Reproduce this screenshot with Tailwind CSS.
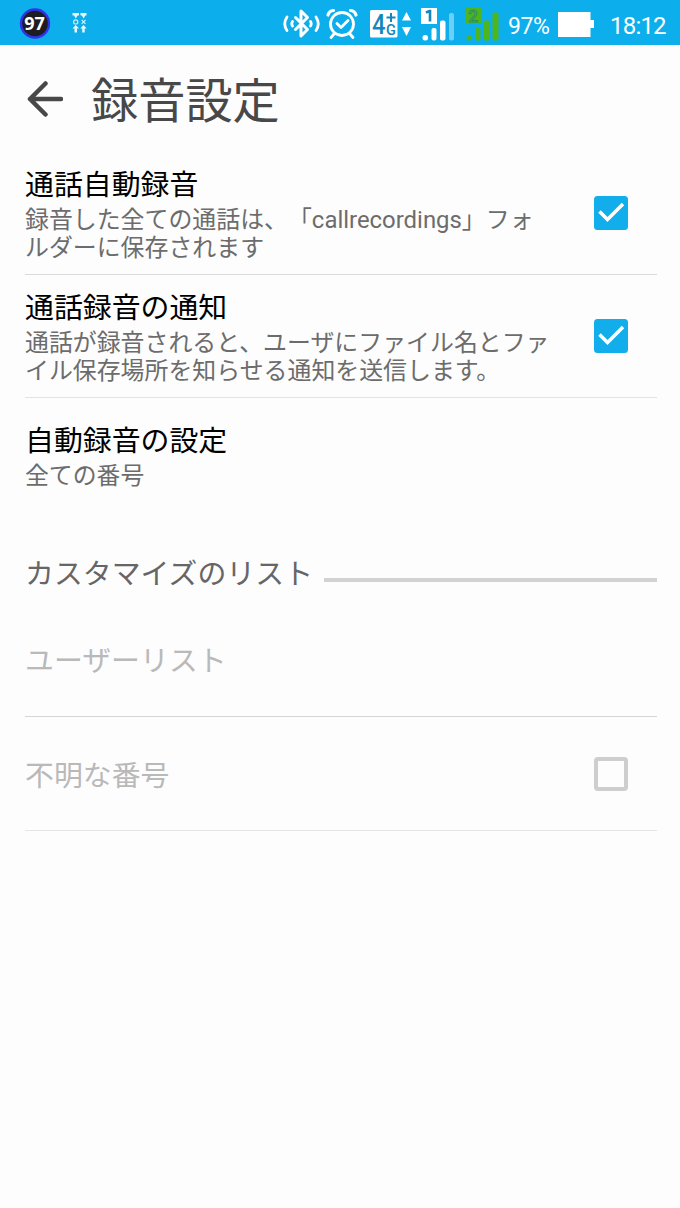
<!DOCTYPE html>
<html lang="ja">
<head>
<meta charset="utf-8">
<title>録音設定</title>
<script src="https://cdn.jsdelivr.net/npm/@tailwindcss/browser@4"></script>
</head>
<body class="w-[680px] h-[1208px] overflow-hidden bg-[#fdfdfd] font-['Roboto','Noto_Sans_CJK_JP',sans-serif] [text-spacing-trim:space-all]">
<header class="h-[45px] bg-[#0daeec] flex items-center text-white">
  <svg class="block shrink-0" width="508" height="45" viewBox="0 0 508 45" fill="none">
    <circle cx="35" cy="23.500" r="14" fill="#1c1c22" stroke="#2f35e6" stroke-width="2.400"/>
    <text x="34.500" y="30" text-anchor="middle" font-family="Open Sans" font-weight="700" font-size="18" fill="#fff">97</text>
    <g fill="#e6f7fe">
      <path d="M72.500 13h6.500v2.500h-1.500l-1.700 3-1.700-3h-1.600zM80.500 13h6v2.500h-1.200l-1.700 3-1.700-3h-1.400zM74.500 32.500v-4h-2l3.300-3.500 3.200 3.500h-2v4zM82.200 32.500v-4h-1.900l3.200-3.500 3.200 3.500h-2v4z"/>
    </g>
    <path d="M81.700 20l3.800 3.800m0-3.800l-3.800 3.800" stroke="#c9eefc" stroke-width="1.200"/>
    <circle cx="75.700" cy="21.900" r="2.100" stroke="#c9eefc" stroke-width="1.200"/>
    <g stroke="#fff" stroke-linecap="round" stroke-linejoin="round">
      <path stroke-width="3" d="M295.500 17.500l12 12-6.500 6.500V11l6.500 6.500-12 12"/>
      <path stroke-width="2.800" d="M287 17q-4.500 6.800 0 13.500M316 17q4.500 6.800 0 13.500"/>
      <path stroke-width="2.800" d="M292.500 21.500q-1.500 2.300 0 4.600M310.500 21.500q1.500 2.300 0 4.600"/>
      <circle cx="342" cy="24" r="11.500" stroke-width="2.800"/>
      <path stroke-width="2.800" d="M337 23.500l4 4 7-7M334 34l-3 3.500M350 34l3 3.500"/>
      <path stroke-width="3.200" d="M328 15q1-4 5.500-4.500M350.500 10.500q4.500.5 5.500 4.500"/>
    </g>
    <rect x="370" y="10" width="27.500" height="27.500" rx="1.500" fill="#fff"/>
    <text x="372" y="34" font-family="Roboto" font-weight="500" font-size="28" textLength="13.500" lengthAdjust="spacingAndGlyphs" fill="#1686bd">4</text>
    <path d="M386.500 17.500h9M391 13v9" stroke="#1686bd" stroke-width="2"/>
    <text x="386" y="34.500" font-family="Roboto" font-weight="500" font-size="14.500" fill="#1686bd">G</text>
    <path d="M402 20.500l4.500-8.500 4.500 8.500zM402 27h9l-4.500 9z" fill="#fff"/>
    <rect x="421" y="8" width="16" height="16" fill="#fff"/>
    <path d="M426 12.500l3.500-1.500h.5V21.500" stroke="#1686bd" stroke-width="2.600"/>
    <g fill="#fff">
      <rect x="422.500" y="35" width="5.500" height="5.500" rx="2.500"/>
      <rect x="431.500" y="28" width="5" height="12.500" rx="2"/>
      <rect x="440" y="20.500" width="5.500" height="20" rx="2"/>
      <rect x="449" y="13" width="5" height="27.500" rx="2" fill="#6dcff7"/>
    </g>
    <g fill="#4eb51d">
      <rect x="465" y="8" width="16.500" height="16"/>
      <rect x="466.500" y="35" width="5.500" height="5.500" rx="2.500"/>
      <rect x="475.500" y="28" width="5" height="12.500" rx="1.500"/>
      <rect x="484" y="20.500" width="5.500" height="20" rx="1.500"/>
      <rect x="492.500" y="12.500" width="6" height="28" rx="1.500"/>
    </g>
    <text x="473" y="21.500" text-anchor="middle" font-family="Roboto" font-weight="500" font-size="17" fill="#4eb51d" stroke="#2a8f68" stroke-width=".9">2</text>
  </svg>
  <span class="w-[50px] pt-[7px] text-[23px] leading-none tracking-[-0.4px]">97%</span>
  <svg class="block shrink-0" width="36" height="45" viewBox="0 0 36 45"><path fill="#fff" d="M0 12h32.500v8H36v8h-3.500v9H0z"/></svg>
  <span class="ml-[16px] pt-[6px] text-[24px] leading-none tracking-[-0.8px] whitespace-nowrap">18:12</span>
</header>
<div class="h-[107px] flex items-center pl-[27px] text-[#484848]">
  <svg class="block shrink-0" width="36" height="36" viewBox="0 0 36 36" fill="none" stroke="currentColor" stroke-width="4.500" stroke-linecap="round" stroke-linejoin="round"><path d="M18.500 2.500L3 18l15.500 15.500M3 18h31"/></svg>
  <h1 class="ml-[28px] pt-[8px] text-[47.200px] leading-none">録音設定</h1>
</div>
<main class="pl-[25px] pr-[23px]">
  <section class="h-[123px] border-b border-[#dadada] flex items-center justify-between pr-[29px]">
    <div class="pt-[2px]">
      <h2 class="text-[28.900px] leading-[38px] text-black">通話自動録音</h2>
      <p class="pt-[2px] text-[23.920px] leading-[28px] text-[#6c6c6c] whitespace-nowrap">録音した全ての通話は、「callrecordings」フォ<br>ルダーに保存されます</p>
    </div>
    <svg class="block shrink-0" width="34" height="34" viewBox="0 0 34 34" fill="none"><rect width="34" height="34" rx="3.500" fill="#12aeec"/><path d="M5.500 15.500l8 8 15.500-15.500" stroke="#fff" stroke-width="3.500"/></svg>
  </section>
  <section class="h-[123px] border-b border-[#e3e3e3] flex items-center justify-between pr-[29px]">
    <div class="pt-[2px]">
      <h2 class="text-[28.900px] leading-[38px] text-black">通話録音の通知</h2>
      <p class="pt-[2px] text-[23.920px] leading-[28px] text-[#6c6c6c] whitespace-nowrap">通話が録音されると、ユーザにファイル名とファ<br>イル保存場所を知らせる通知を送信します。</p>
    </div>
    <svg class="block shrink-0" width="34" height="34" viewBox="0 0 34 34" fill="none"><rect width="34" height="34" rx="3.500" fill="#12aeec"/><path d="M5.500 15.500l8 8 15.500-15.500" stroke="#fff" stroke-width="3.500"/></svg>
  </section>
  <section class="h-[116px] flex flex-col justify-center">
    <h2 class="text-[28.900px] leading-[38px] text-black">自動録音の設定</h2>
    <p class="pt-[2px] text-[23.850px] leading-[28px] text-[#6c6c6c]">全ての番号</p>
  </section>
  <div class="h-[89px] pt-[30px] flex items-center">
    <h3 class="w-[299px] text-[28.900px] leading-[38px] text-[#666] whitespace-nowrap">カスタマイズのリスト</h3>
    <div class="flex-1 h-1 mt-3 bg-[#d2d2d2]"></div>
  </div>
  <section class="h-[114px] border-b border-[#d6d6d6] flex items-center">
    <h2 class="pt-[3px] text-[28.900px] leading-[38px] text-[#b9b9b9]">ユーザーリスト</h2>
  </section>
  <section class="h-[114px] border-b border-[#e5e5e5] flex items-center justify-between pr-[29px]">
    <h2 class="pt-[4px] text-[28.900px] leading-[38px] text-[#b9b9b9]">不明な番号</h2>
    <div class="size-[34px] border-4 border-[#cecece] rounded-[4px]"></div>
  </section>
</main>
</body>
</html>
